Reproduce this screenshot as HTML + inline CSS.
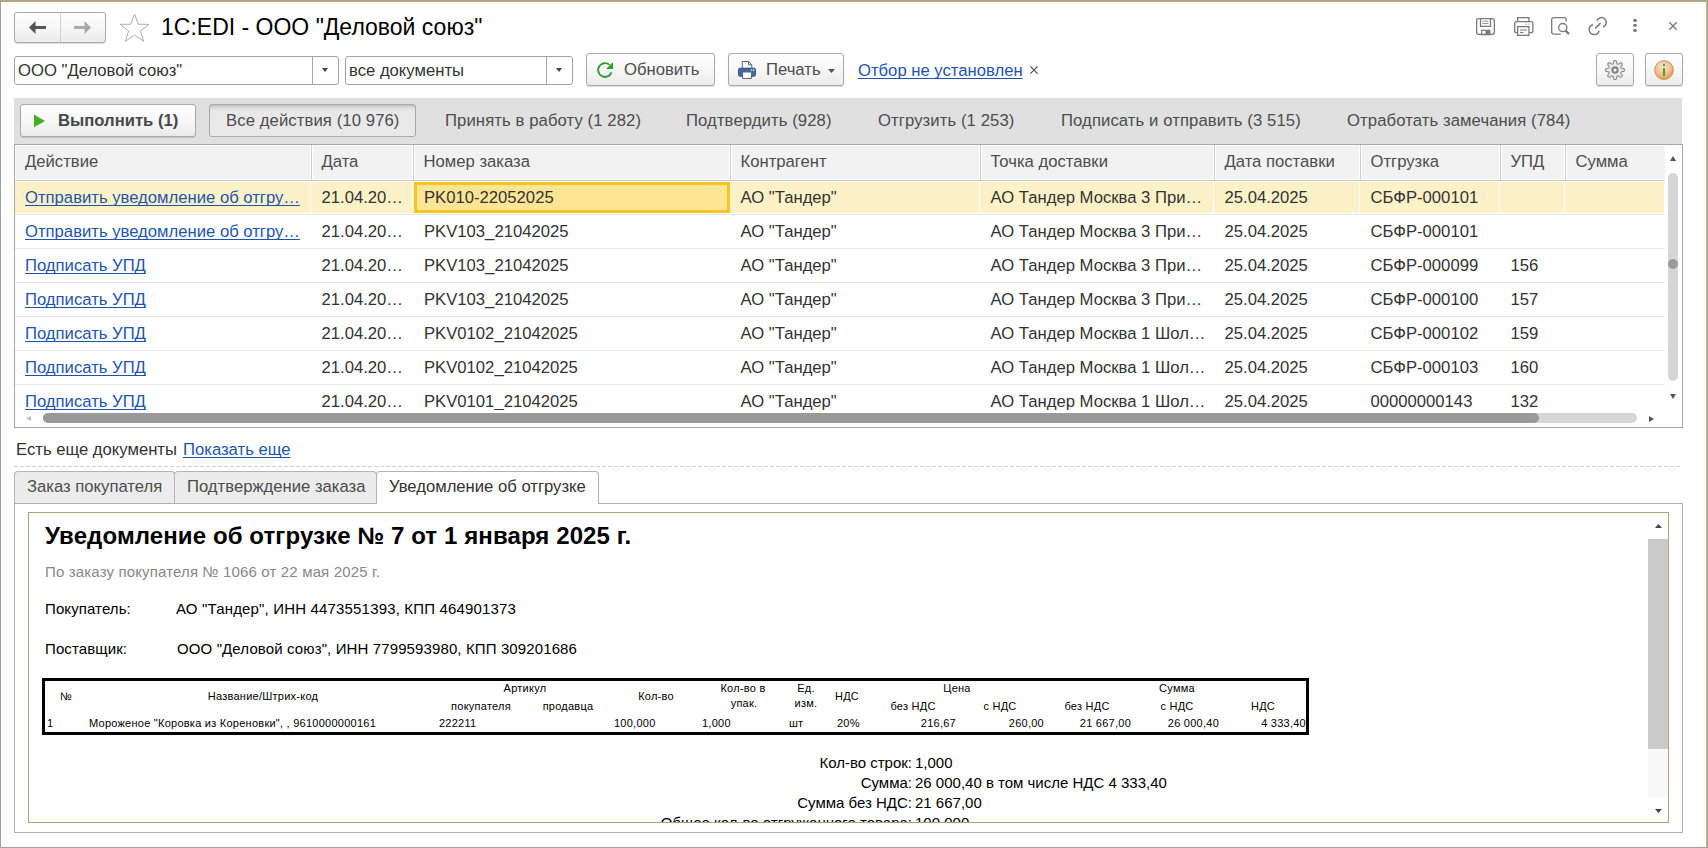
<!DOCTYPE html>
<html><head><meta charset="utf-8">
<style>
*{box-sizing:border-box}
html,body{margin:0;padding:0;width:1708px;height:848px;overflow:hidden;background:#fff}
body{position:relative;font-family:"Liberation Sans",sans-serif;font-size:16.67px;color:#333}
.a{position:absolute;white-space:nowrap}
.btn{position:absolute;border:1px solid #a9a9a9;border-radius:3px;background:linear-gradient(#ffffff,#f7f7f7 50%,#ebebeb);box-shadow:0 1px 1px rgba(0,0,0,.15)}
.combo{position:absolute;border:1px solid #a2a2a2;border-radius:3px;background:#fff}
.lnk{color:#1d55ae;text-decoration:underline;text-decoration-skip-ink:none;text-underline-offset:2px;text-decoration-thickness:1px}
svg{position:absolute;overflow:visible}
</style></head><body>
<div class="a" style="left:0px;top:0px;width:1708px;height:1px;background:#a3a3ab"></div>
<div class="a" style="left:1px;top:1px;width:1706px;height:1px;background:#bcab58"></div>
<div class="a" style="left:0px;top:0px;width:1px;height:848px;background:#a0a0a0"></div>
<div class="a" style="left:1707px;top:0px;width:1px;height:848px;background:#a3a3ab"></div>
<div class="a" style="left:1706px;top:1px;width:1px;height:846px;background:#c8b860"></div>
<div class="a" style="left:0px;top:847px;width:1708px;height:1px;background:#a0a0a0"></div>
<div class="btn" style="left:14px;top:12px;width:92px;height:31px"></div>
<div class="a" style="left:60px;top:13px;width:1px;height:29px;background:#d0d0d0"></div>
<svg style="left:29px;top:21px" width="17" height="13" viewBox="0 0 17 13"><path d="M0 6.5 L6.5 0 V5 H17 V8 H6.5 V13 Z" fill="#555"/></svg>
<svg style="left:74px;top:21px" width="17" height="13" viewBox="0 0 17 13"><path d="M17 6.5 L10.5 0 V5 H0 V8 H10.5 V13 Z" fill="#aaa"/></svg>
<svg style="left:119px;top:13px" width="31" height="29" viewBox="0 0 31 29"><path d="M15.5 1 L19.2 11.2 L30 11.4 L21.4 18 L24.6 28.2 L15.5 22 L6.4 28.2 L9.6 18 L1 11.4 L11.8 11.2 Z" fill="none" stroke="#a9b0b6" stroke-width="1"/></svg>
<div class="a " style="left:161px;top:12.80px;font-size:23px;line-height:29px;color:#000;font-weight:400;">1C:EDI - ООО "Деловой союз"</div>
<svg style="left:1476px;top:18px" width="19" height="17" viewBox="0 0 19 17"><rect x="0.65" y="0.65" width="17.7" height="15.7" rx="2" fill="none" stroke="#7a7a7a" stroke-width="1.3"/><path d="M4.5 0.65 V8.3 H14.5 V0.65" fill="none" stroke="#7a7a7a" stroke-width="1.3"/><line x1="6.3" y1="3.2" x2="12.4" y2="3.2" stroke="#999" stroke-width="1"/><line x1="6.3" y1="5.5" x2="12.4" y2="5.5" stroke="#999" stroke-width="1"/><rect x="5.6" y="12.3" width="8.2" height="4.4" fill="none" stroke="#7a7a7a" stroke-width="1.2"/><rect x="9.5" y="12" width="4.4" height="4.7" fill="#7a7a7a"/></svg>
<svg style="left:1514px;top:17px" width="19" height="19" viewBox="0 0 19 19"><rect x="3.65" y="0.65" width="11.3" height="4" fill="none" stroke="#7a7a7a" stroke-width="1.3"/><rect x="0.65" y="4.65" width="18.2" height="11" rx="2" fill="#fff" stroke="#7a7a7a" stroke-width="1.3"/><rect x="3.65" y="9.65" width="11.3" height="8.7" fill="#fff" stroke="#7a7a7a" stroke-width="1.3"/><line x1="6" y1="13" x2="13" y2="13" stroke="#888" stroke-width="1.1"/><line x1="6" y1="15.5" x2="9.5" y2="15.5" stroke="#7a7a7a" stroke-width="1.1"/><rect x="11" y="6.6" width="1.6" height="1" fill="#aaa"/><rect x="14.2" y="6.6" width="1.6" height="1" fill="#aaa"/></svg>
<svg style="left:1551px;top:17px" width="20" height="19" viewBox="0 0 20 19"><path d="M9.8 17.2 H2.6 A1.9 1.9 0 0 1 0.7 15.3 V2.6 A1.9 1.9 0 0 1 2.6 0.7 H13.3 A1.9 1.9 0 0 1 15.2 2.6 V4.6" fill="none" stroke="#7a7a7a" stroke-width="1.3"/><circle cx="11.8" cy="10.6" r="4.1" fill="#fff" stroke="#7a7a7a" stroke-width="1.3"/><line x1="14.6" y1="13.6" x2="18" y2="17" stroke="#7a7a7a" stroke-width="2.4"/></svg>
<svg style="left:1587px;top:15px" width="22" height="22" viewBox="0 0 22 22"><path d="M9.8 5.8 A4.9 4.9 0 1 1 16.2 12" fill="none" stroke="#7a7a7a" stroke-width="1.5"/><path d="M6 9.7 A5 5 0 1 0 12.1 15.6" fill="none" stroke="#7a7a7a" stroke-width="1.5"/><line x1="8.2" y1="13.4" x2="13.5" y2="8.1" stroke="#7a7a7a" stroke-width="1.5"/></svg>
<svg style="left:1631px;top:18px" width="8" height="15" viewBox="0 0 8 15"><ellipse cx="4" cy="2.4" rx="1.9" ry="1.6" fill="#7a7a7a"/><ellipse cx="4" cy="7.3" rx="1.9" ry="1.6" fill="#7a7a7a"/><ellipse cx="4" cy="12.4" rx="1.9" ry="1.6" fill="#7a7a7a"/></svg>
<svg style="left:1669px;top:22px" width="8" height="8" viewBox="0 0 8 8"><path d="M0.3 0.3 L7.7 7.7 M7.7 0.3 L0.3 7.7" stroke="#7a7a7a" stroke-width="1.4"/></svg>
<div class="combo" style="left:14px;top:56px;width:325px;height:29px"></div>
<div class="a" style="left:312px;top:57px;width:1px;height:27px;background:#a8a8a8"></div>
<svg style="left:322px;top:68px" width="6" height="4" viewBox="0 0 6 4"><path d="M0 0 H6 L3 4 Z" fill="#444"/></svg>
<div class="a " style="left:18px;top:59.99px;font-size:16.67px;line-height:21px;color:#333;font-weight:400;">ООО "Деловой союз"</div>
<div class="combo" style="left:345px;top:56px;width:228px;height:29px"></div>
<div class="a" style="left:546px;top:57px;width:1px;height:27px;background:#a8a8a8"></div>
<svg style="left:556px;top:68px" width="6" height="4" viewBox="0 0 6 4"><path d="M0 0 H6 L3 4 Z" fill="#444"/></svg>
<div class="a " style="left:349px;top:59.99px;font-size:16.67px;line-height:21px;color:#333;font-weight:400;">все документы</div>
<div class="btn" style="left:586px;top:53px;width:129px;height:33px"></div>
<svg style="left:596px;top:60px" width="20" height="19" viewBox="0 0 20 19"><path d="M15.5 12.4 A6.9 6.9 0 1 1 13.4 4.7" fill="none" stroke="#2f9e2f" stroke-width="1.9"/><path d="M17 2 L17 9 L10 9 Z" fill="#2f9e2f"/></svg>
<div class="a " style="left:624px;top:58.99px;font-size:16.67px;line-height:21px;color:#4d4d4d;font-weight:400;">Обновить</div>
<div class="btn" style="left:728px;top:53px;width:116px;height:33px"></div>
<svg style="left:738px;top:61px" width="18" height="18" viewBox="0 0 18 18"><path d="M4.3 0.5 H10.5 L13.8 3.8 V7.5 H4.3 Z" fill="#fff" stroke="#4e6a80" stroke-width="1"/><path d="M10.5 0.5 V3.8 H13.8" fill="none" stroke="#4e6a80" stroke-width="1"/><rect x="0.5" y="7.2" width="17" height="8" rx="1.5" fill="#4466aa" stroke="#3a5570" stroke-width="1"/><rect x="13" y="8.4" width="1.2" height="1.2" fill="#fff"/><rect x="15" y="8.4" width="1.2" height="1.2" fill="#fff"/><path d="M4.5 11 H13.5 V17.5 H4.5 Z" fill="#fff" stroke="#4e6a80" stroke-width="1"/></svg>
<div class="a " style="left:766px;top:58.99px;font-size:16.67px;line-height:21px;color:#4d4d4d;font-weight:400;">Печать</div>
<svg style="left:828px;top:69px" width="7" height="4" viewBox="0 0 7 4"><path d="M0 0 H7 L3.5 4 Z" fill="#555"/></svg>
<div class="a lnk" style="left:858px;top:59.99px;font-size:16.67px;line-height:21px;color:#1d55ae;font-weight:400;">Отбор не установлен</div>
<svg style="left:1030px;top:66px" width="8" height="8" viewBox="0 0 8 8"><path d="M0.4 0.4 L7.6 7.6 M7.6 0.4 L0.4 7.6" stroke="#555" stroke-width="1.3"/></svg>
<div class="btn" style="left:1596px;top:53px;width:38px;height:33px"></div>
<div class="btn" style="left:1645px;top:53px;width:38px;height:33px"></div>
<svg style="left:1605px;top:60px" width="20" height="20" viewBox="0 0 20 20"><path d="M10.00 0.50 L10.30 0.51 L10.59 0.56 L10.88 0.67 L11.15 0.89 L11.38 1.31 L11.53 1.97 L11.63 2.70 L11.74 3.24 L11.87 3.56 L12.03 3.74 L12.21 3.86 L12.39 3.95 L12.58 4.03 L12.78 4.10 L12.99 4.14 L13.23 4.12 L13.55 3.99 L14.01 3.68 L14.60 3.24 L15.17 2.88 L15.63 2.74 L15.97 2.78 L16.25 2.91 L16.50 3.08 L16.72 3.28 L16.92 3.50 L17.09 3.75 L17.22 4.03 L17.26 4.37 L17.12 4.83 L16.76 5.40 L16.32 5.99 L16.01 6.45 L15.88 6.77 L15.86 7.01 L15.90 7.22 L15.97 7.42 L16.05 7.61 L16.14 7.79 L16.26 7.97 L16.44 8.13 L16.76 8.26 L17.30 8.37 L18.03 8.47 L18.69 8.62 L19.11 8.85 L19.33 9.12 L19.44 9.41 L19.49 9.70 L19.50 10.00 L19.49 10.30 L19.44 10.59 L19.33 10.88 L19.11 11.15 L18.69 11.38 L18.03 11.53 L17.30 11.63 L16.76 11.74 L16.44 11.87 L16.26 12.03 L16.14 12.21 L16.05 12.39 L15.97 12.58 L15.90 12.78 L15.86 12.99 L15.88 13.23 L16.01 13.55 L16.32 14.01 L16.76 14.60 L17.12 15.17 L17.26 15.63 L17.22 15.97 L17.09 16.25 L16.92 16.50 L16.72 16.72 L16.50 16.92 L16.25 17.09 L15.97 17.22 L15.63 17.26 L15.17 17.12 L14.60 16.76 L14.01 16.32 L13.55 16.01 L13.23 15.88 L12.99 15.86 L12.78 15.90 L12.58 15.97 L12.39 16.05 L12.21 16.14 L12.03 16.26 L11.87 16.44 L11.74 16.76 L11.63 17.30 L11.53 18.03 L11.38 18.69 L11.15 19.11 L10.88 19.33 L10.59 19.44 L10.30 19.49 L10.00 19.50 L9.70 19.49 L9.41 19.44 L9.12 19.33 L8.85 19.11 L8.62 18.69 L8.47 18.03 L8.37 17.30 L8.26 16.76 L8.13 16.44 L7.97 16.26 L7.79 16.14 L7.61 16.05 L7.42 15.97 L7.22 15.90 L7.01 15.86 L6.77 15.88 L6.45 16.01 L5.99 16.32 L5.40 16.76 L4.83 17.12 L4.37 17.26 L4.03 17.22 L3.75 17.09 L3.50 16.92 L3.28 16.72 L3.08 16.50 L2.91 16.25 L2.78 15.97 L2.74 15.63 L2.88 15.17 L3.24 14.60 L3.68 14.01 L3.99 13.55 L4.12 13.23 L4.14 12.99 L4.10 12.78 L4.03 12.58 L3.95 12.39 L3.86 12.21 L3.74 12.03 L3.56 11.87 L3.24 11.74 L2.70 11.63 L1.97 11.53 L1.31 11.38 L0.89 11.15 L0.67 10.88 L0.56 10.59 L0.51 10.30 L0.50 10.00 L0.51 9.70 L0.56 9.41 L0.67 9.12 L0.89 8.85 L1.31 8.62 L1.97 8.47 L2.70 8.37 L3.24 8.26 L3.56 8.13 L3.74 7.97 L3.86 7.79 L3.95 7.61 L4.03 7.42 L4.10 7.22 L4.14 7.01 L4.12 6.77 L3.99 6.45 L3.68 5.99 L3.24 5.40 L2.88 4.83 L2.74 4.37 L2.78 4.03 L2.91 3.75 L3.08 3.50 L3.28 3.28 L3.50 3.08 L3.75 2.91 L4.03 2.78 L4.37 2.74 L4.83 2.88 L5.40 3.24 L5.99 3.68 L6.45 3.99 L6.77 4.12 L7.01 4.14 L7.22 4.10 L7.42 4.03 L7.61 3.95 L7.79 3.86 L7.97 3.74 L8.13 3.56 L8.26 3.24 L8.37 2.70 L8.47 1.97 L8.62 1.31 L8.85 0.89 L9.12 0.67 L9.41 0.56 L9.70 0.51 Z" fill="#ececec" stroke="#8e8e8e" stroke-width="1.2"/><circle cx="10" cy="10" r="2.6" fill="#fff" stroke="#858585" stroke-width="2.2"/></svg>
<svg style="left:1654px;top:60px" width="20" height="20" viewBox="0 0 20 20"><defs><radialGradient id="ig" cx="45%" cy="35%" r="65%"><stop offset="0" stop-color="#fde8cc"/><stop offset=".6" stop-color="#f8c088"/><stop offset="1" stop-color="#e89a48"/></radialGradient></defs><circle cx="10" cy="10" r="9.4" fill="url(#ig)" stroke="#b08a60" stroke-width=".8"/><rect x="9.1" y="8.2" width="1.8" height="7.6" fill="#2f9a2f"/><circle cx="10" cy="5.2" r="1.1" fill="#2f9a2f"/></svg>
<div class="a" style="left:14px;top:98px;width:1668px;height:47px;background:#e0e0e0"></div>
<div class="btn" style="left:20px;top:104px;width:176px;height:33px"></div>
<svg style="left:34px;top:114px" width="12" height="14" viewBox="0 0 12 14"><path d="M0 0.5 L11 6.9 L0 13.3 Z" fill="#46b020"/></svg>
<div class="a " style="left:58px;top:109.99px;font-size:16.67px;line-height:21px;color:#474747;font-weight:700;">Выполнить (1)</div>
<div class="a" style="left:209px;top:104px;width:207px;height:33px;border:1px solid #a9a9a9;border-radius:3px;background:linear-gradient(#bdbdbd,#dedede 3px,#e8e8e8 6px,#e9e9e9)"></div>
<div class="a " style="left:226px;top:109.99px;font-size:16.67px;line-height:21px;color:#4d4d4d;font-weight:400;letter-spacing:0.1px">Все действия (10 976)</div>
<div class="a " style="left:445px;top:109.99px;font-size:16.67px;line-height:21px;color:#4d4d4d;font-weight:400;letter-spacing:0.1px">Принять в работу (1 282)</div>
<div class="a " style="left:686px;top:109.99px;font-size:16.67px;line-height:21px;color:#4d4d4d;font-weight:400;letter-spacing:0.1px">Подтвердить (928)</div>
<div class="a " style="left:878px;top:109.99px;font-size:16.67px;line-height:21px;color:#4d4d4d;font-weight:400;letter-spacing:0.1px">Отгрузить (1 253)</div>
<div class="a " style="left:1061px;top:109.99px;font-size:16.67px;line-height:21px;color:#4d4d4d;font-weight:400;letter-spacing:0.1px">Подписать и отправить (3 515)</div>
<div class="a " style="left:1347px;top:109.99px;font-size:16.67px;line-height:21px;color:#4d4d4d;font-weight:400;letter-spacing:0.1px">Отработать замечания (784)</div>
<div class="a" style="left:14px;top:144px;width:1669px;height:284px;border:1px solid #a8a8a8;background:#fff"></div>
<div class="a" style="left:15px;top:145px;width:1650px;height:35px;background:#f2f2f2"></div>
<div class="a" style="left:15px;top:145px;width:1650px;height:1px;background:#fff"></div>
<div class="a" style="left:15px;top:145px;width:1px;height:34px;background:#fff"></div>
<div class="a" style="left:15px;top:179px;width:1650px;height:1px;background:#fff"></div>
<div class="a" style="left:310px;top:145px;width:1px;height:35px;background:#fff"></div>
<div class="a" style="left:311px;top:145px;width:1px;height:35px;background:#cfcfcf"></div>
<div class="a" style="left:312px;top:145px;width:1px;height:35px;background:#fff"></div>
<div class="a" style="left:412px;top:145px;width:1px;height:35px;background:#fff"></div>
<div class="a" style="left:413px;top:145px;width:1px;height:35px;background:#cfcfcf"></div>
<div class="a" style="left:414px;top:145px;width:1px;height:35px;background:#fff"></div>
<div class="a" style="left:729px;top:145px;width:1px;height:35px;background:#fff"></div>
<div class="a" style="left:730px;top:145px;width:1px;height:35px;background:#cfcfcf"></div>
<div class="a" style="left:731px;top:145px;width:1px;height:35px;background:#fff"></div>
<div class="a" style="left:979px;top:145px;width:1px;height:35px;background:#fff"></div>
<div class="a" style="left:980px;top:145px;width:1px;height:35px;background:#cfcfcf"></div>
<div class="a" style="left:981px;top:145px;width:1px;height:35px;background:#fff"></div>
<div class="a" style="left:1213px;top:145px;width:1px;height:35px;background:#fff"></div>
<div class="a" style="left:1214px;top:145px;width:1px;height:35px;background:#cfcfcf"></div>
<div class="a" style="left:1215px;top:145px;width:1px;height:35px;background:#fff"></div>
<div class="a" style="left:1359px;top:145px;width:1px;height:35px;background:#fff"></div>
<div class="a" style="left:1360px;top:145px;width:1px;height:35px;background:#cfcfcf"></div>
<div class="a" style="left:1361px;top:145px;width:1px;height:35px;background:#fff"></div>
<div class="a" style="left:1499px;top:145px;width:1px;height:35px;background:#fff"></div>
<div class="a" style="left:1500px;top:145px;width:1px;height:35px;background:#cfcfcf"></div>
<div class="a" style="left:1501px;top:145px;width:1px;height:35px;background:#fff"></div>
<div class="a" style="left:1564px;top:145px;width:1px;height:35px;background:#fff"></div>
<div class="a" style="left:1565px;top:145px;width:1px;height:35px;background:#cfcfcf"></div>
<div class="a" style="left:1566px;top:145px;width:1px;height:35px;background:#fff"></div>
<div class="a" style="left:15px;top:180px;width:1650px;height:1px;background:#cacaca"></div>
<div class="a" style="left:15px;top:181px;width:1650px;height:1px;background:#fff"></div>
<div class="a " style="left:25px;top:150.99px;font-size:16.67px;line-height:21px;color:#4d4d4d;font-weight:400;">Действие</div>
<div class="a " style="left:321.5px;top:150.99px;font-size:16.67px;line-height:21px;color:#4d4d4d;font-weight:400;">Дата</div>
<div class="a " style="left:423.5px;top:150.99px;font-size:16.67px;line-height:21px;color:#4d4d4d;font-weight:400;">Номер заказа</div>
<div class="a " style="left:740.5px;top:150.99px;font-size:16.67px;line-height:21px;color:#4d4d4d;font-weight:400;">Контрагент</div>
<div class="a " style="left:990.5px;top:150.99px;font-size:16.67px;line-height:21px;color:#4d4d4d;font-weight:400;">Точка доставки</div>
<div class="a " style="left:1224.5px;top:150.99px;font-size:16.67px;line-height:21px;color:#4d4d4d;font-weight:400;">Дата поставки</div>
<div class="a " style="left:1370.5px;top:150.99px;font-size:16.67px;line-height:21px;color:#4d4d4d;font-weight:400;">Отгрузка</div>
<div class="a " style="left:1510.5px;top:150.99px;font-size:16.67px;line-height:21px;color:#4d4d4d;font-weight:400;">УПД</div>
<div class="a " style="left:1575.5px;top:150.99px;font-size:16.67px;line-height:21px;color:#4d4d4d;font-weight:400;">Сумма</div>
<div class="a" style="left:15px;top:182px;width:1649px;height:31px;background:#fdf2c7"></div>
<div class="a" style="left:310px;top:182px;width:1px;height:31px;background:#fff"></div>
<div class="a" style="left:412px;top:182px;width:1px;height:31px;background:#fff"></div>
<div class="a" style="left:729px;top:182px;width:1px;height:31px;background:#fff"></div>
<div class="a" style="left:979px;top:182px;width:1px;height:31px;background:#fff"></div>
<div class="a" style="left:1213px;top:182px;width:1px;height:31px;background:#fff"></div>
<div class="a" style="left:1359px;top:182px;width:1px;height:31px;background:#fff"></div>
<div class="a" style="left:1499px;top:182px;width:1px;height:31px;background:#fff"></div>
<div class="a" style="left:1564px;top:182px;width:1px;height:31px;background:#fff"></div>
<div class="a" style="left:414px;top:182px;width:316px;height:31px;border:3px solid #f8c520;background:#fde594"></div>
<div class="a" style="left:15px;top:214px;width:1650px;height:1px;background:#e6e6e6"></div>
<div class="a lnk" style="left:25px;top:186.99px;font-size:16.67px;line-height:21px;color:#1d55ae;font-weight:400;">Отправить уведомление об отгру…</div>
<div class="a " style="left:321.5px;top:186.99px;font-size:16.67px;line-height:21px;color:#333;font-weight:400;">21.04.20…</div>
<div class="a " style="left:424.0px;top:186.99px;font-size:16.67px;line-height:21px;color:#333;font-weight:400;">PK010-22052025</div>
<div class="a " style="left:740.5px;top:186.99px;font-size:16.67px;line-height:21px;color:#333;font-weight:400;">АО "Тандер"</div>
<div class="a " style="left:990.5px;top:186.99px;font-size:16.67px;line-height:21px;color:#333;font-weight:400;">АО Тандер Москва 3 При…</div>
<div class="a " style="left:1224.5px;top:186.99px;font-size:16.67px;line-height:21px;color:#333;font-weight:400;">25.04.2025</div>
<div class="a " style="left:1370.5px;top:186.99px;font-size:16.67px;line-height:21px;color:#333;font-weight:400;">СБФР-000101</div>
<div class="a" style="left:15px;top:248px;width:1650px;height:1px;background:#e6e6e6"></div>
<div class="a lnk" style="left:25px;top:220.99px;font-size:16.67px;line-height:21px;color:#1d55ae;font-weight:400;">Отправить уведомление об отгру…</div>
<div class="a " style="left:321.5px;top:220.99px;font-size:16.67px;line-height:21px;color:#333;font-weight:400;">21.04.20…</div>
<div class="a " style="left:424.0px;top:220.99px;font-size:16.67px;line-height:21px;color:#333;font-weight:400;">PKV103_21042025</div>
<div class="a " style="left:740.5px;top:220.99px;font-size:16.67px;line-height:21px;color:#333;font-weight:400;">АО "Тандер"</div>
<div class="a " style="left:990.5px;top:220.99px;font-size:16.67px;line-height:21px;color:#333;font-weight:400;">АО Тандер Москва 3 При…</div>
<div class="a " style="left:1224.5px;top:220.99px;font-size:16.67px;line-height:21px;color:#333;font-weight:400;">25.04.2025</div>
<div class="a " style="left:1370.5px;top:220.99px;font-size:16.67px;line-height:21px;color:#333;font-weight:400;">СБФР-000101</div>
<div class="a" style="left:15px;top:282px;width:1650px;height:1px;background:#e6e6e6"></div>
<div class="a lnk" style="left:25px;top:254.99px;font-size:16.67px;line-height:21px;color:#1d55ae;font-weight:400;">Подписать УПД</div>
<div class="a " style="left:321.5px;top:254.99px;font-size:16.67px;line-height:21px;color:#333;font-weight:400;">21.04.20…</div>
<div class="a " style="left:424.0px;top:254.99px;font-size:16.67px;line-height:21px;color:#333;font-weight:400;">PKV103_21042025</div>
<div class="a " style="left:740.5px;top:254.99px;font-size:16.67px;line-height:21px;color:#333;font-weight:400;">АО "Тандер"</div>
<div class="a " style="left:990.5px;top:254.99px;font-size:16.67px;line-height:21px;color:#333;font-weight:400;">АО Тандер Москва 3 При…</div>
<div class="a " style="left:1224.5px;top:254.99px;font-size:16.67px;line-height:21px;color:#333;font-weight:400;">25.04.2025</div>
<div class="a " style="left:1370.5px;top:254.99px;font-size:16.67px;line-height:21px;color:#333;font-weight:400;">СБФР-000099</div>
<div class="a " style="left:1510.5px;top:254.99px;font-size:16.67px;line-height:21px;color:#333;font-weight:400;">156</div>
<div class="a" style="left:15px;top:316px;width:1650px;height:1px;background:#e6e6e6"></div>
<div class="a lnk" style="left:25px;top:288.99px;font-size:16.67px;line-height:21px;color:#1d55ae;font-weight:400;">Подписать УПД</div>
<div class="a " style="left:321.5px;top:288.99px;font-size:16.67px;line-height:21px;color:#333;font-weight:400;">21.04.20…</div>
<div class="a " style="left:424.0px;top:288.99px;font-size:16.67px;line-height:21px;color:#333;font-weight:400;">PKV103_21042025</div>
<div class="a " style="left:740.5px;top:288.99px;font-size:16.67px;line-height:21px;color:#333;font-weight:400;">АО "Тандер"</div>
<div class="a " style="left:990.5px;top:288.99px;font-size:16.67px;line-height:21px;color:#333;font-weight:400;">АО Тандер Москва 3 При…</div>
<div class="a " style="left:1224.5px;top:288.99px;font-size:16.67px;line-height:21px;color:#333;font-weight:400;">25.04.2025</div>
<div class="a " style="left:1370.5px;top:288.99px;font-size:16.67px;line-height:21px;color:#333;font-weight:400;">СБФР-000100</div>
<div class="a " style="left:1510.5px;top:288.99px;font-size:16.67px;line-height:21px;color:#333;font-weight:400;">157</div>
<div class="a" style="left:15px;top:350px;width:1650px;height:1px;background:#e6e6e6"></div>
<div class="a lnk" style="left:25px;top:322.99px;font-size:16.67px;line-height:21px;color:#1d55ae;font-weight:400;">Подписать УПД</div>
<div class="a " style="left:321.5px;top:322.99px;font-size:16.67px;line-height:21px;color:#333;font-weight:400;">21.04.20…</div>
<div class="a " style="left:424.0px;top:322.99px;font-size:16.67px;line-height:21px;color:#333;font-weight:400;">PKV0102_21042025</div>
<div class="a " style="left:740.5px;top:322.99px;font-size:16.67px;line-height:21px;color:#333;font-weight:400;">АО "Тандер"</div>
<div class="a " style="left:990.5px;top:322.99px;font-size:16.67px;line-height:21px;color:#333;font-weight:400;">АО Тандер Москва 1 Шол…</div>
<div class="a " style="left:1224.5px;top:322.99px;font-size:16.67px;line-height:21px;color:#333;font-weight:400;">25.04.2025</div>
<div class="a " style="left:1370.5px;top:322.99px;font-size:16.67px;line-height:21px;color:#333;font-weight:400;">СБФР-000102</div>
<div class="a " style="left:1510.5px;top:322.99px;font-size:16.67px;line-height:21px;color:#333;font-weight:400;">159</div>
<div class="a" style="left:15px;top:384px;width:1650px;height:1px;background:#e6e6e6"></div>
<div class="a lnk" style="left:25px;top:356.99px;font-size:16.67px;line-height:21px;color:#1d55ae;font-weight:400;">Подписать УПД</div>
<div class="a " style="left:321.5px;top:356.99px;font-size:16.67px;line-height:21px;color:#333;font-weight:400;">21.04.20…</div>
<div class="a " style="left:424.0px;top:356.99px;font-size:16.67px;line-height:21px;color:#333;font-weight:400;">PKV0102_21042025</div>
<div class="a " style="left:740.5px;top:356.99px;font-size:16.67px;line-height:21px;color:#333;font-weight:400;">АО "Тандер"</div>
<div class="a " style="left:990.5px;top:356.99px;font-size:16.67px;line-height:21px;color:#333;font-weight:400;">АО Тандер Москва 1 Шол…</div>
<div class="a " style="left:1224.5px;top:356.99px;font-size:16.67px;line-height:21px;color:#333;font-weight:400;">25.04.2025</div>
<div class="a " style="left:1370.5px;top:356.99px;font-size:16.67px;line-height:21px;color:#333;font-weight:400;">СБФР-000103</div>
<div class="a " style="left:1510.5px;top:356.99px;font-size:16.67px;line-height:21px;color:#333;font-weight:400;">160</div>
<div class="a lnk" style="left:25px;top:390.99px;font-size:16.67px;line-height:21px;color:#1d55ae;font-weight:400;">Подписать УПД</div>
<div class="a " style="left:321.5px;top:390.99px;font-size:16.67px;line-height:21px;color:#333;font-weight:400;">21.04.20…</div>
<div class="a " style="left:424.0px;top:390.99px;font-size:16.67px;line-height:21px;color:#333;font-weight:400;">PKV0101_21042025</div>
<div class="a " style="left:740.5px;top:390.99px;font-size:16.67px;line-height:21px;color:#333;font-weight:400;">АО "Тандер"</div>
<div class="a " style="left:990.5px;top:390.99px;font-size:16.67px;line-height:21px;color:#333;font-weight:400;">АО Тандер Москва 1 Шол…</div>
<div class="a " style="left:1224.5px;top:390.99px;font-size:16.67px;line-height:21px;color:#333;font-weight:400;">25.04.2025</div>
<div class="a " style="left:1370.5px;top:390.99px;font-size:16.67px;line-height:21px;color:#333;font-weight:400;">00000000143</div>
<div class="a " style="left:1510.5px;top:390.99px;font-size:16.67px;line-height:21px;color:#333;font-weight:400;">132</div>
<div class="a" style="left:1668px;top:173px;width:10px;height:208px;background:#d6d6d6;border-radius:5px"></div>
<svg style="left:1670px;top:156px" width="6" height="5" viewBox="0 0 6 5"><path d="M0 5 H6 L3 0 Z" fill="#555"/></svg>
<svg style="left:1670px;top:394px" width="6" height="5" viewBox="0 0 6 5"><path d="M0 0 H6 L3 5 Z" fill="#555"/></svg>
<div class="a" style="left:1668px;top:259px;width:10px;height:10px;background:#999;border-radius:5px"></div>
<div class="a" style="left:15px;top:410px;width:1650px;height:17px;background:#fff"></div>
<div class="a" style="left:43px;top:413px;width:1594px;height:10px;background:#d6d6d6;border-radius:5px"></div>
<div class="a" style="left:43px;top:413px;width:1496px;height:10px;background:#999;border-radius:5px"></div>
<svg style="left:26px;top:416px" width="5" height="5" viewBox="0 0 5 5"><path d="M5 0 V5 L0 2.5 Z" fill="#c0c0c0"/></svg>
<svg style="left:1649px;top:416px" width="5" height="6" viewBox="0 0 5 6"><path d="M0 0 V6 L5 3 Z" fill="#555"/></svg>
<div class="a " style="left:16px;top:438.99px;font-size:16.67px;line-height:21px;color:#333;font-weight:400;">Есть еще документы</div>
<div class="a lnk" style="left:183px;top:438.99px;font-size:16.67px;line-height:21px;color:#1d55ae;font-weight:400;">Показать еще</div>
<div class="a" style="left:14px;top:466px;width:1668px;height:1px;background:repeating-linear-gradient(90deg,#d0d0d0 0 4px,transparent 4px 6px)"></div>
<div class="a" style="left:14px;top:503px;width:1669px;height:330px;border:1px solid #b0b0b0;background:#fff"></div>
<div class="a" style="left:14px;top:471px;width:161px;height:32px;border:1px solid #b4b4b4;border-bottom:none;background:#ececec;border-radius:4px 4px 0 0"></div>
<div class="a" style="left:174px;top:471px;width:203px;height:32px;border:1px solid #b4b4b4;border-bottom:none;background:#ececec;border-radius:4px 4px 0 0"></div>
<div class="a" style="left:376px;top:471px;width:223px;height:33px;border:1px solid #b4b4b4;border-bottom:none;background:#fff;border-radius:4px 4px 0 0"></div>
<div class="a" style="left:377px;top:503px;width:221px;height:1px;background:#fff"></div>
<div class="a " style="left:27px;top:475.99px;font-size:16.67px;line-height:21px;color:#4d4d4d;font-weight:400;">Заказ покупателя</div>
<div class="a " style="left:187px;top:475.99px;font-size:16.67px;line-height:21px;color:#4d4d4d;font-weight:400;">Подтверждение заказа</div>
<div class="a " style="left:389px;top:475.99px;font-size:16.67px;line-height:21px;color:#333;font-weight:400;">Уведомление об отгрузке</div>
<div class="a" style="left:28px;top:512px;width:1641px;height:311px;border:1px solid #aca379;background:#fff"></div>
<div class="a" style="left:1648px;top:539px;width:20px;height:210px;background:#cacaca"></div>
<div class="a" style="left:1648px;top:749px;width:20px;height:48px;background:#f9f9f9"></div>
<svg style="left:1655px;top:524px" width="7" height="4" viewBox="0 0 7 4"><path d="M0 4 H7 L3.5 0 Z" fill="#444"/></svg>
<svg style="left:1655px;top:809px" width="7" height="4" viewBox="0 0 7 4"><path d="M0 0 H7 L3.5 4 Z" fill="#444"/></svg>
<div class="a" style="left:29px;top:513px;width:1619px;height:309px;overflow:hidden">
<div class="a " style="left:16px;top:8.47px;font-size:24px;line-height:30px;color:#000;font-weight:700;letter-spacing:0.1px">Уведомление об отгрузке № 7 от 1 января 2025 г.</div>
<div class="a " style="left:16px;top:48.54px;font-size:15px;line-height:19px;color:#888;font-weight:400;letter-spacing:0.15px">По заказу покупателя № 1066 от 22 мая 2025 г.</div>
<div class="a " style="left:16px;top:85.54px;font-size:15px;line-height:19px;color:#000;font-weight:400;letter-spacing:0.1px">Покупатель:</div>
<div class="a " style="left:147px;top:85.54px;font-size:15px;line-height:19px;color:#000;font-weight:400;letter-spacing:0.17px">АО "Тандер", ИНН 4473551393, КПП 464901373</div>
<div class="a " style="left:16px;top:125.54px;font-size:15px;line-height:19px;color:#000;font-weight:400;letter-spacing:0.1px">Поставщик:</div>
<div class="a " style="left:148px;top:125.54px;font-size:15px;line-height:19px;color:#000;font-weight:400;letter-spacing:0.12px">ООО "Деловой союз", ИНН 7799593980, КПП 309201686</div>
<div class="a" style="left:13px;top:165px;width:1267px;height:57px;border:3px solid #000"></div>
<div class="a " style="left:37px;top:176.36px;font-size:11px;line-height:14px;color:#000;font-weight:400;letter-spacing:0.25px;transform:translateX(-50%)">№</div>
<div class="a " style="left:234px;top:176.36px;font-size:11px;line-height:14px;color:#000;font-weight:400;letter-spacing:0.25px;transform:translateX(-50%)">Название/Штрих-код</div>
<div class="a " style="left:496px;top:168.36px;font-size:11px;line-height:14px;color:#000;font-weight:400;letter-spacing:0.25px;transform:translateX(-50%)">Артикул</div>
<div class="a " style="left:452px;top:186.36px;font-size:11px;line-height:14px;color:#000;font-weight:400;letter-spacing:0.25px;transform:translateX(-50%)">покупателя</div>
<div class="a " style="left:539px;top:186.36px;font-size:11px;line-height:14px;color:#000;font-weight:400;letter-spacing:0.25px;transform:translateX(-50%)">продавца</div>
<div class="a " style="left:627px;top:176.36px;font-size:11px;line-height:14px;color:#000;font-weight:400;letter-spacing:0.25px;transform:translateX(-50%)">Кол-во</div>
<div class="a " style="left:714px;top:168.36px;font-size:11px;line-height:14px;color:#000;font-weight:400;letter-spacing:0.25px;transform:translateX(-50%)">Кол-во в</div>
<div class="a " style="left:715px;top:183.36px;font-size:11px;line-height:14px;color:#000;font-weight:400;letter-spacing:0.25px;transform:translateX(-50%)">упак.</div>
<div class="a " style="left:777px;top:168.36px;font-size:11px;line-height:14px;color:#000;font-weight:400;letter-spacing:0.25px;transform:translateX(-50%)">Ед.</div>
<div class="a " style="left:777px;top:183.36px;font-size:11px;line-height:14px;color:#000;font-weight:400;letter-spacing:0.25px;transform:translateX(-50%)">изм.</div>
<div class="a " style="left:818px;top:176.36px;font-size:11px;line-height:14px;color:#000;font-weight:400;letter-spacing:0.25px;transform:translateX(-50%)">НДС</div>
<div class="a " style="left:928px;top:168.36px;font-size:11px;line-height:14px;color:#000;font-weight:400;letter-spacing:0.25px;transform:translateX(-50%)">Цена</div>
<div class="a " style="left:884px;top:186.36px;font-size:11px;line-height:14px;color:#000;font-weight:400;letter-spacing:0.25px;transform:translateX(-50%)">без НДС</div>
<div class="a " style="left:971px;top:186.36px;font-size:11px;line-height:14px;color:#000;font-weight:400;letter-spacing:0.25px;transform:translateX(-50%)">с НДС</div>
<div class="a " style="left:1058px;top:186.36px;font-size:11px;line-height:14px;color:#000;font-weight:400;letter-spacing:0.25px;transform:translateX(-50%)">без НДС</div>
<div class="a " style="left:1148px;top:168.36px;font-size:11px;line-height:14px;color:#000;font-weight:400;letter-spacing:0.25px;transform:translateX(-50%)">Сумма</div>
<div class="a " style="left:1148px;top:186.36px;font-size:11px;line-height:14px;color:#000;font-weight:400;letter-spacing:0.25px;transform:translateX(-50%)">с НДС</div>
<div class="a " style="left:1234px;top:186.36px;font-size:11px;line-height:14px;color:#000;font-weight:400;letter-spacing:0.25px;transform:translateX(-50%)">НДС</div>
<div class="a " style="left:18px;top:203.36px;font-size:11px;line-height:14px;color:#000;font-weight:400;letter-spacing:0.25px;">1</div>
<div class="a " style="left:60px;top:203.36px;font-size:11px;line-height:14px;color:#000;font-weight:400;letter-spacing:0.25px;">Мороженое "Коровка из Кореновки", , 9610000000161</div>
<div class="a " style="left:410px;top:203.36px;font-size:11px;line-height:14px;color:#000;font-weight:400;letter-spacing:0.25px;">222211</div>
<div class="a " style="left:585px;top:203.36px;font-size:11px;line-height:14px;color:#000;font-weight:400;letter-spacing:0.25px;">100,000</div>
<div class="a " style="left:673px;top:203.36px;font-size:11px;line-height:14px;color:#000;font-weight:400;letter-spacing:0.25px;">1,000</div>
<div class="a " style="left:760px;top:203.36px;font-size:11px;line-height:14px;color:#000;font-weight:400;letter-spacing:0.25px;">шт</div>
<div class="a " style="left:808px;top:203.36px;font-size:11px;line-height:14px;color:#000;font-weight:400;letter-spacing:0.25px;">20%</div>
<div class="a " style="left:927px;top:203.36px;font-size:11px;line-height:14px;color:#000;font-weight:400;letter-spacing:0.25px;transform:translateX(-100%)">216,67</div>
<div class="a " style="left:1015px;top:203.36px;font-size:11px;line-height:14px;color:#000;font-weight:400;letter-spacing:0.25px;transform:translateX(-100%)">260,00</div>
<div class="a " style="left:1102px;top:203.36px;font-size:11px;line-height:14px;color:#000;font-weight:400;letter-spacing:0.25px;transform:translateX(-100%)">21 667,00</div>
<div class="a " style="left:1190px;top:203.36px;font-size:11px;line-height:14px;color:#000;font-weight:400;letter-spacing:0.25px;transform:translateX(-100%)">26 000,40</div>
<div class="a " style="left:1277px;top:203.36px;font-size:11px;line-height:14px;color:#000;font-weight:400;letter-spacing:0.25px;transform:translateX(-100%)">4 333,40</div>
<div class="a " style="left:883px;top:239.54px;font-size:15px;line-height:19px;color:#000;font-weight:400;transform:translateX(-100%)">Кол-во строк:</div>
<div class="a " style="left:886px;top:239.54px;font-size:15px;line-height:19px;color:#000;font-weight:400;">1,000</div>
<div class="a " style="left:883px;top:259.54px;font-size:15px;line-height:19px;color:#000;font-weight:400;transform:translateX(-100%)">Сумма:</div>
<div class="a " style="left:886px;top:259.54px;font-size:15px;line-height:19px;color:#000;font-weight:400;">26 000,40 в том числе НДС 4 333,40</div>
<div class="a " style="left:883px;top:279.54px;font-size:15px;line-height:19px;color:#000;font-weight:400;transform:translateX(-100%)">Сумма без НДС:</div>
<div class="a " style="left:886px;top:279.54px;font-size:15px;line-height:19px;color:#000;font-weight:400;">21 667,00</div>
<div class="a " style="left:883px;top:299.54px;font-size:15px;line-height:19px;color:#000;font-weight:400;transform:translateX(-100%)">Общее кол-во отгруженного товара:</div>
<div class="a " style="left:886px;top:299.54px;font-size:15px;line-height:19px;color:#000;font-weight:400;">100,000</div>
</div>
</body></html>
